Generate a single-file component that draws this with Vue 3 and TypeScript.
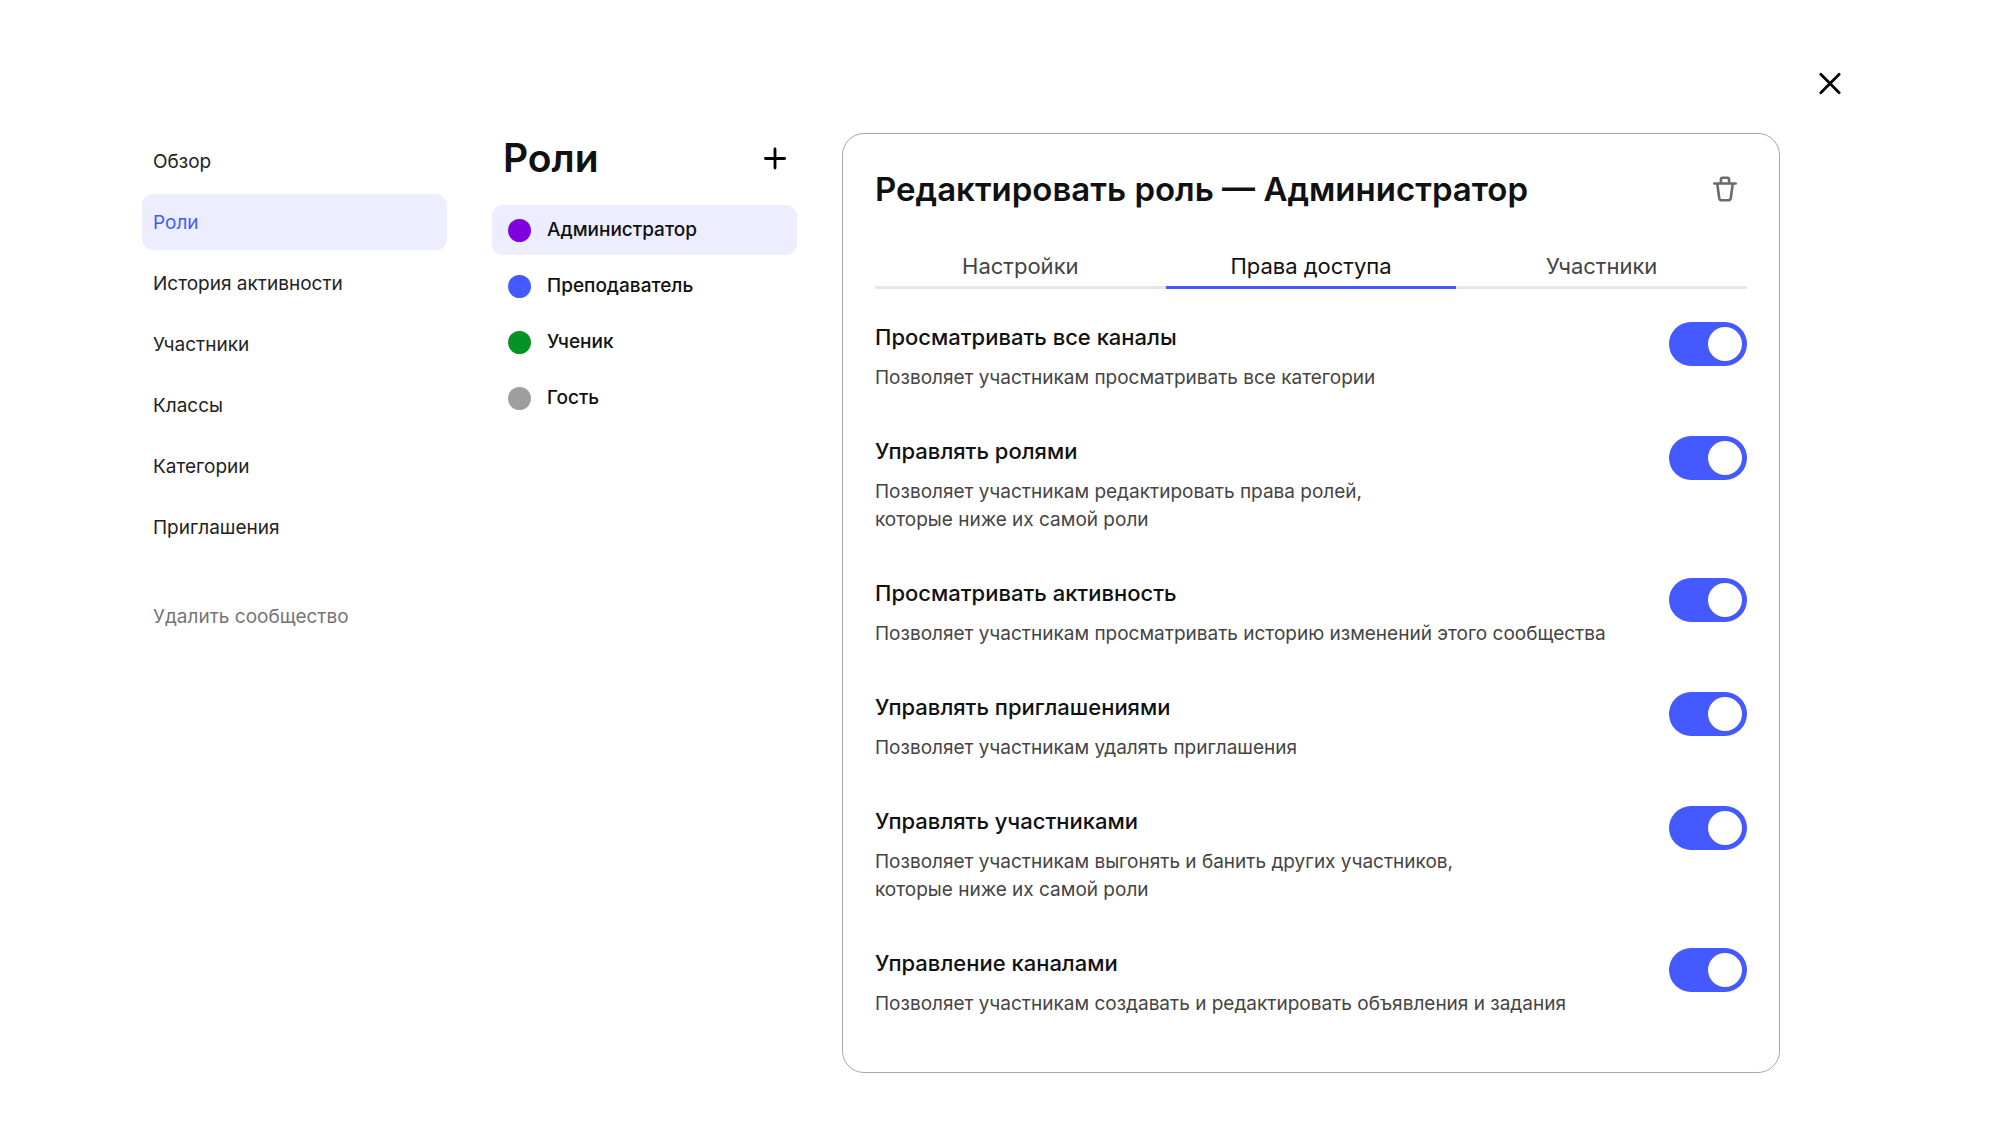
<script setup lang="ts">
import { ref } from 'vue'

interface Role {
  name: string
  color: string
}

interface Permission {
  id: string
  title: string
  lines: string[]
  enabled: boolean
}

const sections: string[] = [
  'Обзор',
  'Роли',
  'История активности',
  'Участники',
  'Классы',
  'Категории',
  'Приглашения',
]
const activeSection = ref('Роли')

const roles: Role[] = [
  { name: 'Администратор', color: 'violet' },
  { name: 'Преподаватель', color: 'blue' },
  { name: 'Ученик', color: 'green' },
  { name: 'Гость', color: 'gray' },
]
const activeRole = ref('Администратор')

const tabs: string[] = ['Настройки', 'Права доступа', 'Участники']
const activeTab = ref('Права доступа')

const permissions = ref<Permission[]>([
  {
    id: 'view-channels',
    title: 'Просматривать все каналы',
    lines: ['Позволяет участникам просматривать все категории'],
    enabled: true,
  },
  {
    id: 'manage-roles',
    title: 'Управлять ролями',
    lines: ['Позволяет участникам редактировать права ролей,', 'которые ниже их самой роли'],
    enabled: true,
  },
  {
    id: 'view-activity',
    title: 'Просматривать активность',
    lines: ['Позволяет участникам просматривать историю изменений этого сообщества'],
    enabled: true,
  },
  {
    id: 'manage-invites',
    title: 'Управлять приглашениями',
    lines: ['Позволяет участникам удалять приглашения'],
    enabled: true,
  },
  {
    id: 'manage-members',
    title: 'Управлять участниками',
    lines: ['Позволяет участникам выгонять и банить других участников,', 'которые ниже их самой роли'],
    enabled: true,
  },
  {
    id: 'manage-channels',
    title: 'Управление каналами',
    lines: ['Позволяет участникам создавать и редактировать объявления и задания'],
    enabled: true,
  },
])
</script>

<template>
  <div class="page">
    <header class="top">
      <button class="icon-button" type="button" aria-label="Закрыть">
        <svg width="34" height="34" viewBox="0 0 34 34" fill="none" stroke="#000" stroke-width="2.8" stroke-linecap="round">
          <path d="M7.8 8.3L26.2 26.7M26.2 8.3L7.8 26.7" />
        </svg>
      </button>
    </header>

    <div class="columns">
      <nav class="sections">
        <a
          v-for="section in sections"
          :key="section"
          href="#"
          class="section"
          :class="{ active: section === activeSection }"
          @click.prevent="activeSection = section"
        >{{ section }}</a>
        <button class="section delete" type="button">Удалить сообщество</button>
      </nav>

      <section class="roles">
        <div class="roles-head">
          <h1>Роли</h1>
          <button class="icon-button" type="button" aria-label="Добавить роль">
            <svg width="34" height="34" viewBox="0 0 34 34" fill="none" stroke="#000" stroke-width="2.8" stroke-linecap="round">
              <path d="M17 7.9V27.1M7.4 17.5H26.6" />
            </svg>
          </button>
        </div>
        <div class="role-list">
          <button
            v-for="role in roles"
            :key="role.name"
            type="button"
            class="role"
            :class="{ active: role.name === activeRole }"
            @click="activeRole = role.name"
          >
            <span class="dot" :class="role.color"></span>
            <span>{{ role.name }}</span>
          </button>
        </div>
      </section>

      <main class="card">
        <div class="card-head">
          <h2>Редактировать роль — {{ activeRole }}</h2>
          <button class="icon-button" type="button" aria-label="Удалить роль">
            <svg width="34" height="34" viewBox="0 0 34 34" fill="none" stroke="#6b6b6b" stroke-width="2.6" stroke-linecap="round" stroke-linejoin="round">
              <path d="M6.3 11.5H27.7" />
              <path d="M12.9 11V7.5Q12.9 5.8 14.6 5.8H19.4Q21.1 5.8 21.1 7.5V11" />
              <path d="M9.3 12L11.2 26Q11.6 28.3 13.8 28.3H20.2Q22.4 28.3 22.8 26L24.7 12" />
            </svg>
          </button>
        </div>

        <div class="tabs" role="tablist">
          <button
            v-for="tab in tabs"
            :key="tab"
            type="button"
            role="tab"
            class="tab"
            :class="{ active: tab === activeTab }"
            :aria-selected="tab === activeTab"
            @click="activeTab = tab"
          >{{ tab }}</button>
        </div>

        <div class="permissions">
          <div v-for="item in permissions" :key="item.id" class="permission">
            <label :for="item.id" class="permission-text">
              <span class="permission-title">{{ item.title }}</span>
              <span v-for="line in item.lines" :key="line" class="permission-line">{{ line }}</span>
            </label>
            <input :id="item.id" v-model="item.enabled" type="checkbox" role="switch" class="switch" />
          </div>
        </div>
      </main>
    </div>
  </div>
</template>

<style>
body {
  background: #fff;
}
</style>

<style scoped>
.page {
  font-family: Inter, "Liberation Sans", sans-serif;
  font-size: 19px;
  line-height: 28px;
  color: #222;
  padding-top: 66px;
}

button {
  font: inherit;
  color: inherit;
  background: none;
  border: 0;
  margin: 0;
  padding: 0;
  text-align: left;
  cursor: pointer;
}

h1,
h2 {
  margin: 0;
  font-weight: 600;
  color: #111;
}

.top {
  display: flex;
  justify-content: flex-end;
  padding-right: 153px;
}

.icon-button {
  display: flex;
  flex: none;
}

.columns {
  display: grid;
  grid-template-columns: 305px 305px minmax(0, 1fr);
  column-gap: 45px;
  align-items: start;
  padding: 33px 220px 72px 142px;
}

.sections {
  display: flex;
  flex-direction: column;
  gap: 5px;
}

.section {
  padding: 15px 11px 13px;
  border-radius: 11px;
  color: #222;
  text-decoration: none;
}

.section.active {
  background: #ecedff;
  color: #4459ff;
}

.section.delete {
  margin-top: 28px;
  color: #757575;
}

.roles-head {
  display: flex;
  align-items: center;
  justify-content: space-between;
  padding: 0 5px 0 11px;
}

h1 {
  font-size: 39px;
  line-height: 50px;
}

.role-list {
  display: flex;
  flex-direction: column;
  gap: 6px;
  margin-top: 22px;
}

.role {
  display: flex;
  align-items: center;
  gap: 16px;
  padding: 11px 16px;
  border-radius: 11px;
  font-weight: 500;
  color: #111;
}

.role.active {
  background: #ecedff;
}

.dot {
  width: 23px;
  height: 23px;
  border-radius: 50%;
}

.violet {
  background: #8000e0;
}

.blue {
  background: #4459ff;
}

.green {
  background: #059327;
}

.gray {
  background: #9e9e9e;
}

.card {
  border: 1px solid #a8a8a8;
  border-radius: 22px;
  padding: 33px 32px 54px;
}

.card-head {
  display: flex;
  align-items: center;
  justify-content: space-between;
  padding-right: 5px;
}

h2 {
  font-size: 33px;
  line-height: 44px;
}

.tabs {
  display: grid;
  grid-template-columns: repeat(3, 1fr);
  margin-top: 41px;
}

.tab {
  padding-bottom: 6px;
  border-bottom: 3px solid #e6e6e6;
  font-size: 22px;
  text-align: center;
  color: #444;
}

.tab.active {
  border-color: #4459ff;
  color: #111;
}

.permissions {
  display: flex;
  flex-direction: column;
  gap: 44px;
  margin-top: 33px;
}

.permission {
  display: flex;
  align-items: flex-start;
  justify-content: space-between;
}

.permission-text {
  display: flex;
  flex-direction: column;
  color: #444;
}

.permission-title {
  margin-bottom: 12px;
  font-size: 22px;
  line-height: 30px;
  font-weight: 500;
  color: #111;
}

.switch {
  appearance: none;
  display: flex;
  flex: none;
  box-sizing: border-box;
  width: 78px;
  height: 44px;
  margin: 0;
  padding: 5px;
  border-radius: 22px;
  background: #b3b3b3;
  cursor: pointer;
}

.switch::before {
  content: "";
  width: 34px;
  height: 34px;
  border-radius: 50%;
  background: #fff;
}

.switch:checked {
  justify-content: flex-end;
  background: #4459ff;
}
</style>
